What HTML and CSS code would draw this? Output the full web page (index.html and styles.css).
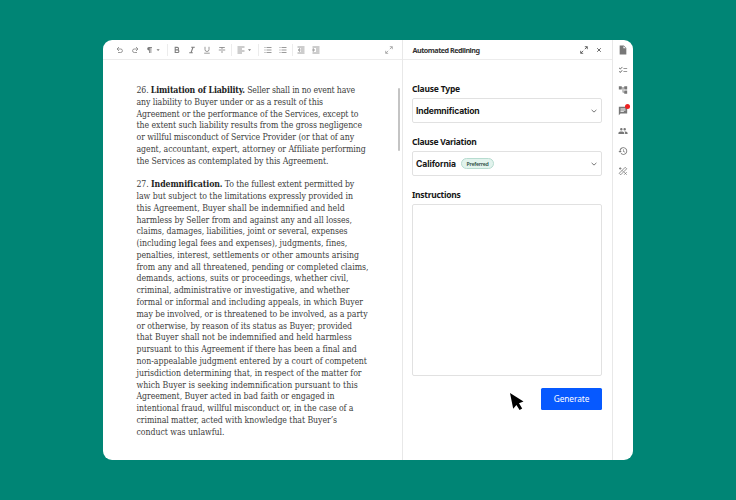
FILE: index.html
```html
<!DOCTYPE html>
<html lang="en">
<head>
<meta charset="utf-8">
<title>Automated Redlining</title>
<link rel="stylesheet" href="styles.css">
</head>
<body>
<main class="window">
  <section class="editor">
    <header class="toolbar">
      <div class="group history">
        <svg viewBox="0 0 8 8"><path d="M3 1 1 3l2 2M1.2 3h3.500a1.700 1.700 0 0 1 0 3.500H2"/></svg>
        <svg viewBox="0 0 8 8"><path d="m5 1 2 2-2 2M6.800 3H3.300a1.700 1.700 0 0 0 0 3.500H6"/></svg>
        <svg class="wide" viewBox="0 0 14 8"><path class="fill" d="M6 1H3a1.800 1.800 0 0 0 0 3.600V7h.8V1.800h.7V7h.8V1.800H6zM10.500 3.200h3.200L12.100 5z"/></svg>
      </div>
      <div class="group marks">
        <svg viewBox="0 0 8 8"><path class="heavy" d="M2.200 1.400h2.100a1.200 1.200 0 0 1 0 2.500H2.200zM2.200 3.900h2.400a1.300 1.300 0 0 1 0 2.600H2.200z"/></svg>
        <svg viewBox="0 0 8 8"><path class="heavy" d="M3.200 1.300h3.600M1.200 6.700h3.600M5 1.300 3 6.700"/></svg>
        <svg viewBox="0 0 8 8"><path d="M2 .8V3.500a2 2 0 0 0 4 0V.8M1.200 7.200h5.600"/></svg>
        <svg viewBox="0 0 8 8"><path d="M1.200 1.500h5.600M4 1.500v1.500M.8 4h6.400M4 5v2"/></svg>
      </div>
      <div class="group align">
        <svg class="wide" viewBox="0 0 14 8"><path d="M.5 1h7M.5 3h4.500M.5 5h7M.5 7h4.500"/><path class="fill" d="M11 3.200h3L12.500 5z"/></svg>
      </div>
      <div class="group lists">
        <svg viewBox="0 0 8 8"><path d="M.5 1.500h1M2.500 1.500h5M.5 4h1M2.500 4h5M.5 6.500h1M2.500 6.500h5"/></svg>
        <svg viewBox="0 0 8 8"><path d="M.5 1.500h1M2.500 1.500h5M.5 4h1M2.500 4h5M.5 6.500h1M2.500 6.500h5"/></svg>
      </div>
      <div class="group indents">
        <svg viewBox="0 0 8 8"><path d="M.5 1h7M4 3h3.500M4 5h3.500M.5 7h7M2.800 2.600 1.200 4l1.600 1.400z"/></svg>
        <svg viewBox="0 0 8 8"><path d="M.5 1h7M4 3h3.500M4 5h3.500M.5 7h7M1 2.600 2.600 4 1 5.400z"/></svg>
      </div>
      <svg class="expand" viewBox="0 0 8 8"><path d="M4.800.7h2.500v2.500M7.200.8 4.800 3.200M3.200 7.300H.7V4.800M.8 7.200l2.400-2.400"/></svg>
    </header>
    <article class="document">
      <p>
        <span class="line" data-width="218.5">26. <b>Limitation of Liability.</b> Seller shall in no event have</span>
        <span class="line" data-width="186.5">any liability to Buyer under or as a result of this</span>
        <span class="line" data-width="222">Agreement or the performance of the Services, except to</span>
        <span class="line" data-width="225.5">the extent such liability results from the gross negligence</span>
        <span class="line" data-width="217.5">or willful misconduct of Service Provider (or that of any</span>
        <span class="line" data-width="229">agent, accountant, expert, attorney or Affiliate performing</span>
        <span class="line" data-width="192">the Services as contemplated by this Agreement.</span>
      </p>
      <p>
        <span class="line" data-width="217">27. <b>Indemnification.</b> To the fullest extent permitted by</span>
        <span class="line" data-width="216.5">law but subject to the limitations expressly provided in</span>
        <span class="line" data-width="208">this Agreement, Buyer shall be indemnified and held</span>
        <span class="line" data-width="215.5">harmless by Seller from and against any and all losses,</span>
        <span class="line" data-width="211">claims, damages, liabilities, joint or several, expenses</span>
        <span class="line" data-width="210.5">(including legal fees and expenses), judgments, fines,</span>
        <span class="line" data-width="222.5">penalties, interest, settlements or other amounts arising</span>
        <span class="line" data-width="232">from any and all threatened, pending or completed claims,</span>
        <span class="line" data-width="212">demands, actions, suits or proceedings, whether civil,</span>
        <span class="line" data-width="213">criminal, administrative or investigative, and whether</span>
        <span class="line" data-width="226.5">formal or informal and including appeals, in which Buyer</span>
        <span class="line" data-width="231">may be involved, or is threatened to be involved, as a party</span>
        <span class="line" data-width="215.5">or otherwise, by reason of its status as Buyer; provided</span>
        <span class="line" data-width="215">that Buyer shall not be indemnified and held harmless</span>
        <span class="line" data-width="220">pursuant to this Agreement if there has been a final and</span>
        <span class="line" data-width="230.5">non-appealable judgment entered by a court of competent</span>
        <span class="line" data-width="225">jurisdiction determining that, in respect of the matter for</span>
        <span class="line" data-width="221">which Buyer is seeking indemnification pursuant to this</span>
        <span class="line" data-width="198">Agreement, Buyer acted in bad faith or engaged in</span>
        <span class="line" data-width="217">intentional fraud, willful misconduct or, in the case of a</span>
        <span class="line" data-width="200.5">criminal matter, acted with knowledge that Buyer’s</span>
        <span class="line" data-width="88">conduct was unlawful.</span>
      </p>
      <div class="scrollbar"></div>
    </article>
  </section>
  <section class="panel">
    <header class="panel-header">
      <h1><span class="line" data-width="67">Automated Redlining</span></h1>
      <svg viewBox="0 0 8 8"><path d="M4.800.7h2.500v2.500M7.200.8 4.800 3.200M3.200 7.300H.7V4.800M.8 7.200l2.400-2.400"/></svg>
      <svg viewBox="0 0 8 8"><path d="m2.200 2.200 3.600 3.600M5.800 2.200 2.200 5.800"/></svg>
    </header>
    <form class="form">
      <label><span class="line" data-width="48">Clause Type</span></label>
      <div class="select"><span class="line" data-width="63.5">Indemnification</span><svg viewBox="0 0 8 8"><path d="m1.600 2.900 2.400 2.200 2.400-2.200"/></svg></div>
      <label><span class="line" data-width="64.5">Clause Variation</span></label>
      <div class="select"><span class="line" data-width="40">California</span><span class="tag"><span class="line" data-width="22">Preferred</span></span><svg viewBox="0 0 8 8"><path d="m1.600 2.900 2.400 2.200 2.400-2.200"/></svg></div>
      <label><span class="line" data-width="48.5">Instructions</span></label>
      <div class="textarea"></div>
      <div class="actions"><div class="button"><span class="line" data-width="35.5">Generate</span></div></div>
    </form>
  </section>
  <nav class="rail">
    <svg viewBox="0 0 24 24"><path d="M14 1H4v22h16V7zM13 8V3l6 5z"/></svg>
    <svg viewBox="0 0 24 24"><path d="M22 7h-9v2h9zm0 8h-9v2h9zM5.500 11 2 7.500l1.400-1.400 2.100 2.100 4.300-4.200 1.400 1.400zm0 8L2 15.500l1.400-1.400 2.100 2.100 4.300-4.200 1.400 1.400z"/></svg>
    <svg viewBox="0 0 24 24"><path d="M22 11V3h-7v3H9V3H2v8h7V8h2v10h4v3h7v-8h-7v3h-2V8h2v3z"/></svg>
    <div class="notify"><svg viewBox="0 0 24 24"><path fill-rule="evenodd" d="M2 2h20v16H6l-4 4zm4 10v2h8v-2zm0-3v2h12V9zm0-3v2h12V6z"/></svg><i class="badge"></i></div>
    <svg viewBox="0 0 24 24"><path d="M16 11a3 3 0 1 0 0-6 3 3 0 0 0 0 6zm-8 0a3 3 0 1 0 0-6 3 3 0 0 0 0 6zm0 2c-2.300 0-7 1.200-7 3.500V19h14v-2.500C15 14.200 10.300 13 8 13zm8 0h-1c1.200.8 2 2 2 3.500V19h6v-2.500c0-2.300-4.700-3.500-7-3.500z"/></svg>
    <svg viewBox="0 0 24 24"><path d="M13 3a9 9 0 0 0-9 9H1l3.900 3.900L9 12H6a7 7 0 1 1 2 4.900l-1.400 1.400A9 9 0 1 0 13 3zm-1 5v5l4.300 2.500.7-1.200-3.500-2.100V8z"/></svg>
    <svg class="design" viewBox="0 0 10 10"><path d="m1.200 7.300 6-6 1.500 1.500-6 6zM1 2.500h2.500M2.200 1.200v2.600M6.200 6.200l2.500 2.500M8.700 6.200 6.200 8.700M3.800 4.200l1.500 1.500"/></svg>
  </nav>
</main>
<svg class="cursor" viewBox="0 0 14 18"><path d="M0 0 13.500 8.500 9 10.200 12.200 15.400 9.600 17.100 6.400 12 3.200 15.700z"/></svg>
<script src="fit.js"></script>
</body>
</html>
```
FILE: styles.css
```css
* { box-sizing: border-box; }
body {
  margin: 0;
  width: 736px;
  height: 500px;
  padding: 40px 103px;
  background: #008575;
  font-family: "Noto Sans", "Open Sans", sans-serif;
  color: #161616;
  overflow: hidden;
}
h1, p { margin: 0; }
svg { display: block; flex: none; width: 8px; height: 8px; fill: none; stroke: #808080; stroke-width: .8; }
.fill { fill: #777; stroke: none; }
.heavy { stroke-width: 1.100; }
.line { display: block; width: max-content; white-space: nowrap; }
.window {
  display: grid;
  grid-template-columns: 299px 211px 1fr;
  width: 530px;
  height: 420px;
  overflow: hidden;
  border-radius: 9px;
  background: #fff;
}
.toolbar, .panel-header { display: flex; align-items: center; height: 20px; border-bottom: 1px solid #ececec; }
.toolbar { padding-left: 12.500px; }
.group { display: flex; align-items: center; height: 12px; }
.group + .group { border-left: 1px solid #ececec; }
.wide { width: 14px; }
.history { gap: 7px; width: 51.500px; }
.marks { gap: 7.200px; width: 64px; padding-left: 4.500px; }
.align { width: 27px; padding-left: 4.500px; }
.lists { gap: 7px; width: 33.500px; padding-left: 4.500px; }
.indents { gap: 7px; padding-left: 4px; }
.expand { margin-left: auto; margin-right: 9px; stroke: #999; }
.document {
  position: relative;
  padding: 25px 0 0 33.500px;
  font: 8.700px/11.780px "DejaVu Serif Condensed", "DejaVu Serif", serif;
  font-stretch: condensed;
  color: #404040;
}
.document b { color: #222; }
.document p + p { margin-top: 11.780px; }
.scrollbar { position: absolute; top: 28px; right: 2px; width: 2px; height: 63px; border-radius: 1px; background: #c4c4c4; }
.panel { border: solid #e8e8e8; border-width: 0 1px; }
.panel-header { gap: 7px; padding: 0 9.500px; }
.panel-header h1 { flex: 1; font-size: 7.200px; font-weight: 700; line-height: 10px; color: #333; }
.panel-header svg { stroke: #444; }
.form { padding: 23px 10px 0 9px; }
.form label { display: block; height: 15px; font-size: 8.500px; font-weight: 700; line-height: 12px; }
.select {
  display: flex;
  align-items: center;
  height: 25px;
  margin-bottom: 13px;
  padding: 0 3px;
  border: 1px solid #e1e1e1;
  border-radius: 2px;
  font: 700 8.600px/12px Inter, sans-serif;
}
.select > svg { margin-left: auto; stroke: #555; }
.tag {
  display: grid;
  place-items: center;
  width: 33px;
  height: 11.500px;
  margin-left: 5px;
  border: 1px solid #b7dcd0;
  border-radius: 6px;
  background: #e2f3ed;
  font: 600 5.200px/8px "Noto Sans", sans-serif;
  color: #294a40;
}
.textarea { height: 172px; border: 1px solid #e1e1e1; border-radius: 2px; }
.actions { display: flex; justify-content: flex-end; padding-top: 12px; }
.button {
  display: grid;
  place-items: center;
  width: 61px;
  height: 22px;
  border-radius: 1.500px;
  background: #0659ff;
  color: #fff;
  font-size: 8.300px;
  line-height: 12px;
}
.rail { display: flex; flex-direction: column; align-items: center; gap: 10.200px; padding-top: 5px; }
.rail svg { width: 10px; height: 10px; fill: #777; stroke: none; }
.rail .design { fill: none; stroke: #777; stroke-width: .8; }
.notify { position: relative; }
.badge { position: absolute; top: -2px; right: -2px; width: 5px; height: 5px; border-radius: 50%; background: #ed2222; }
.cursor { position: absolute; left: 510px; top: 393px; width: 14px; height: 18px; fill: #000; stroke: none; }
```
FILE: fit.js
```js
// Tracks each line so that it sets to its measure.
document.querySelectorAll(".line").forEach((line) => {
  const gap = Number(line.dataset.width) - line.getBoundingClientRect().width;
  line.style.letterSpacing = gap / line.textContent.length + "px";
});
```
